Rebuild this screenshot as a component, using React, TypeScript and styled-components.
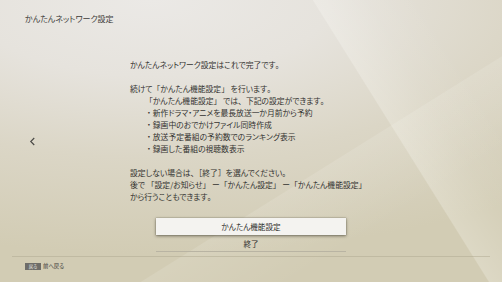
import styled, {createGlobalStyle} from 'styled-components'

const GlobalStyle = createGlobalStyle`
  html, body {
    margin: 0;
    padding: 0;
    background: #d8d3c2;
  }
  body {
    font-family: "Noto Sans CJK JP", "Noto Sans", sans-serif;
    color: #333230;
  }
`

const features = [
  '新作ドラマ・アニメを最長放送一か月前から予約',
  '録画中のおでかけファイル同時作成',
  '放送予定番組の予約数でのランキング表示',
  '録画した番組の視聴数表示',
]

// kana are set proportionally, brackets and commas keep their full width
const Jp = ({text}: {text: string}) => (
  <>
    {text.split(/([「」、。［］])/).map((part, i) =>
      /^[「」、。［］]$/.test(part) ? <Punct key={i}>{part}</Punct> : part,
    )}
  </>
)

const App = () => {
  return (
    <>
      <GlobalStyle />
      <Screen>
        <Header>かんたんネットワーク設定</Header>
        <Main>
          <Side>
            <Chevron viewBox="0 0 8 10" aria-hidden>
              <path d="M6 1 L2 5 L6 9" fill="none" stroke="#4a4946" strokeWidth="1.3" />
            </Chevron>
          </Side>
          <Content>
            <Message>
              <Line><Jp text="かんたんネットワーク設定はこれで完了です。" /></Line>
              <Blank />
              <Line><Jp text="続けて「かんたん機能設定」 を行います。" /></Line>
              <Line $indent><Jp text="「かんたん機能設定」 では、下記の設定ができます。" /></Line>
              {features.map((item) => (
                <Line key={item} $indent>
                  <Punct>・</Punct>{item}
                </Line>
              ))}
              <Blank />
              <Line><Jp text="設定しない場合は、［終了］を選んでください。" /></Line>
              <Line><Jp text="後で 「設定/お知らせ」 ー「かんたん設定」 ー「かんたん機能設定」" /></Line>
              <Line><Jp text="から行うこともできます。" /></Line>
            </Message>
            <Menu>
              <MenuItem $focused>かんたん機能設定</MenuItem>
              <MenuItem>終了</MenuItem>
            </Menu>
          </Content>
        </Main>
        <Footer>
          <KeyBadge>戻る</KeyBadge>
          <Hint>前へ戻る</Hint>
        </Footer>
      </Screen>
    </>
  )
}

const Screen = styled.div`
  width: 502px;
  height: 282px;
  overflow: hidden;
  display: flex;
  flex-direction: column;
  font-feature-settings: 'palt';
  background:
    linear-gradient(58deg, transparent 0%, transparent 72%, rgba(255, 255, 250, 0.24) 72.2%, rgba(255, 255, 250, 0.08) 80%, transparent 88%),
    linear-gradient(148deg, transparent 0%, transparent 62%, rgba(255, 255, 250, 0.12) 62.2%, transparent 78%),
    radial-gradient(ellipse 120% 90% at 30% 0%, #ebe9e6 0%, #e6e3dd 30%, #dbd6c6 62%, #d2ccb4 100%);
`

const Header = styled.header`
  height: 36px;
  padding-left: 25px;
  display: flex;
  align-items: center;
  font-size: 8px;
  color: #3c3b38;
`

const Main = styled.main`
  flex: 1;
  display: flex;
`

const Side = styled.div`
  width: 130px;
  padding: 101px 0 0 29px;
  box-sizing: border-box;
`

const Chevron = styled.svg`
  display: block;
  width: 7px;
  height: 9px;
`

const Content = styled.section`
  padding-top: 23px;
  display: flex;
  flex-direction: column;
`

const Message = styled.div`
  font-size: 7.8px;
  line-height: 12px;
  white-space: pre;
`

const Punct = styled.span`
  font-feature-settings: normal;
`

const Line = styled.div<{$indent?: boolean}>`
  padding-left: ${({$indent}) => ($indent ? '15px' : '0')};
`

const Blank = styled.div`
  height: 12px;
`

const Menu = styled.div`
  margin: 15px 0 0 26px;
  width: 190px;
  display: flex;
  flex-direction: column;
  border-bottom: 1px solid #b9b4a3;
`

const MenuItem = styled.div<{$focused?: boolean}>`
  height: ${({$focused}) => ($focused ? '17px' : '16px')};
  display: flex;
  align-items: center;
  justify-content: center;
  font-size: 7.6px;
  color: #2f2e2c;
  background: ${({$focused}) => ($focused ? '#f4f3f0' : 'transparent')};
  box-shadow: ${({$focused}) =>
    $focused ? '0 1px 3px rgba(40, 36, 24, 0.55), 0 0 1px rgba(40, 36, 24, 0.5)' : 'none'};
`

const Footer = styled.footer`
  height: 26px;
  margin: 0 12px;
  padding: 6px 0 0 13px;
  box-sizing: border-box;
  border-top: 1px solid rgba(170, 164, 140, 0.45);
  display: flex;
  align-items: flex-start;
  gap: 2px;
`

const KeyBadge = styled.span`
  width: 16px;
  height: 7px;
  background: #6e6d69;
  color: #e8e7e3;
  font-size: 4.4px;
  line-height: 7px;
  text-align: center;
`

const Hint = styled.span`
  font-size: 5.4px;
  line-height: 7px;
  color: #3a3936;
`

export default App
